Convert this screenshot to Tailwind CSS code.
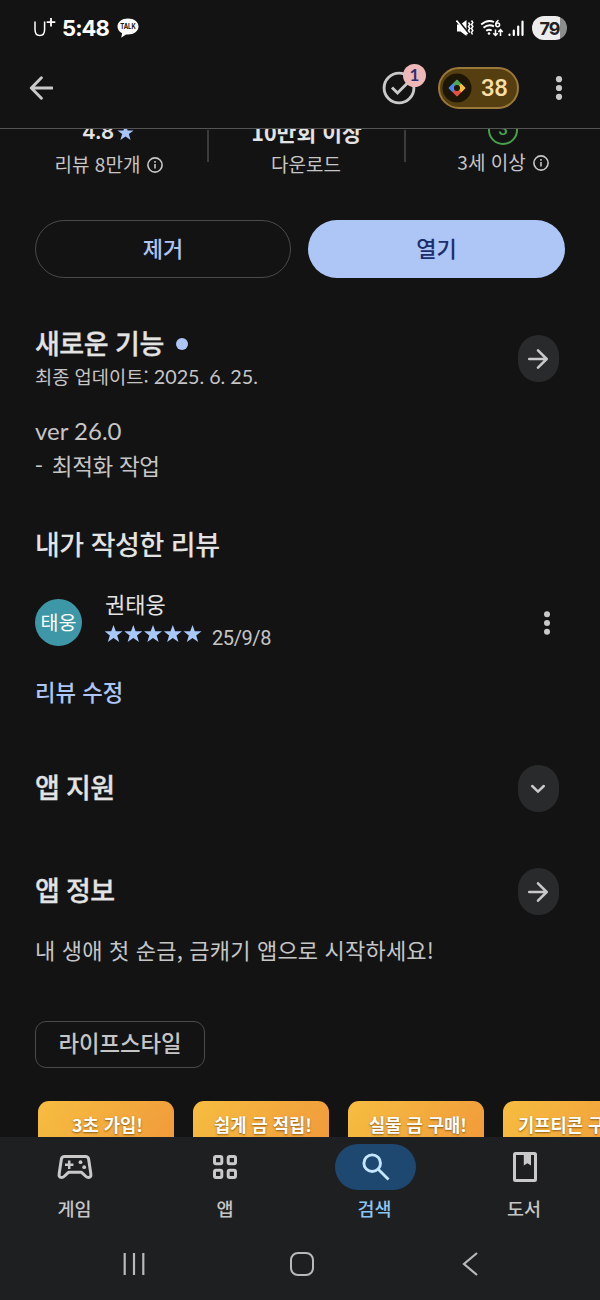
<!DOCTYPE html>
<html lang="ko">
<head>
<meta charset="utf-8">
<title>앱 정보</title>
<script src="https://cdn.jsdelivr.net/npm/@tailwindcss/browser@4"></script>
</head>
<body class="bg-[#131313]">
<div class="flex h-[1300px] w-[600px] flex-col overflow-hidden bg-[#131313] font-['Noto_Sans_CJK_KR',sans-serif] font-medium text-[#c6c6c6] whitespace-nowrap">

  <!-- status bar -->
  <header class="flex h-14 shrink-0 items-center pl-[33px] pr-[33px] text-white">
    <svg class="h-6 w-[23px]" viewBox="0 0 23 24" fill="none" stroke="#fff"><path d="M2 5.500V13.500Q2 19.500 6.800 19.500T11.600 13.500V5.500" stroke-width="1.500"/><path d="M18 2V10.500M13.700 6.200H22.300" stroke-width="1.800"/></svg>
    <span class="ml-[6px] w-[47px] font-['Inter',sans-serif] text-[22px] leading-6 font-bold tracking-[-0.9px]">5:48</span>
    <svg class="ml-2 h-6 w-[22px]" viewBox="0 0 22 24"><path d="M11 2.500C5 2.500.5 6 .5 10.500c0 3 1.800 5.400 4.600 6.800L4.200 21.800 9 18.400c7 .8 12.500-2.900 12.500-7.900 0-4.500-4.500-8-10.500-8Z" fill="#fff"/><text x="11" y="13.200" text-anchor="middle" font-family="Inter, sans-serif" font-size="7" font-weight="700" textLength="15.500" lengthAdjust="spacingAndGlyphs" fill="#131313">TALK</text></svg>
    <div class="ml-auto flex items-center">
      <svg class="h-6 w-[18px]" viewBox="0 0 18 24"><path d="M1 8.500h3.500L10.500 4v16L4.500 15.500H1Z" fill="#fff"/><path d="M.5 2.500 13 18" stroke="#131313" stroke-width="2"/><path d="M.5 4.500 11.500 18.200" stroke="#fff" stroke-width="1.700"/><path d="M12.500 6.500l1.300 2-1.300 2 1.300 2-1.300 2 1.300 2M15.500 4.500l1.300 2-1.300 2 1.300 2-1.300 2 1.300 2-1.300 2 1 2" fill="none" stroke="#fff" stroke-width="1.500"/></svg>
      <svg class="ml-[6px] h-6 w-[24px]" viewBox="0 0 24 24" fill="none" stroke="#fff" stroke-width="1.900"><path d="M1.200 8.500Q7.500 3 14 6M3.500 11.700Q8.500 7.500 14 10.300M6.200 14.800Q9 12.700 11.700 14.500"/><circle cx="9" cy="17.500" r="1.300" fill="#fff" stroke="none"/><path d="M18.500 4.200Q15.800 6 15.900 8.500" stroke-width="1.500"/><circle cx="17.700" cy="8.800" r="1.900" stroke-width="1.500"/><path d="M15.500 13.500v6M13.300 17.200l2.200 2.300 2.200-2.300M20.500 20v-6M18.300 16l2.200-2.300 2.200 2.300" stroke-width="1.500"/></svg>
      <svg class="ml-[3px] h-6 w-[18px]" viewBox="0 0 18 24" stroke="#fff" stroke-width="2.200" stroke-linecap="round"><path d="M2.500 18.500v.5M6.800 14.500v4.500M11.200 10.500v8.500M15.500 5.500v13.500"/></svg>
      <div class="ml-[7px] flex h-6 w-[35px] items-center justify-center rounded-full bg-[linear-gradient(90deg,#ededed_0_28px,#8d8d8d_28px)] font-['Inter',sans-serif] text-[18px] font-bold tracking-[-1px] text-[#222]">79</div>
    </div>
  </header>

  <!-- app bar -->
  <div class="flex h-[73px] shrink-0 items-center border-b border-[#545454] pb-[9px] pl-[29px] pr-[37px]">
    <svg class="h-6 w-6" viewBox="0 0 24 24" fill="none" stroke="#c9c9c9" stroke-width="2.900" stroke-linecap="round" stroke-linejoin="round"><path d="M12.400 1.700 2.300 12l10.100 10.300M3 12H23"/></svg>
    <div class="relative ml-auto h-9 w-9">
      <svg class="h-9 w-9" viewBox="0 0 36 36" fill="none" stroke="#c9c9c9" stroke-width="2.900"><circle cx="18" cy="18" r="14.900"/><path d="M11 17.500l5.500 5.500L26.500 13"/></svg>
      <span class="absolute left-[22px] top-[-6px] flex h-[23px] w-[23px] items-center justify-center rounded-full bg-[#efb8b8] font-['Lato',sans-serif] text-[17px] font-bold text-[#2b2d72]">1</span>
    </div>
    <div class="ml-[21px] flex h-[42px] w-[81px] items-center rounded-full border-2 border-[#9a7838] bg-[#553f11] pl-[2px]">
      <svg class="h-[30px] w-[30px]" viewBox="0 0 30 30"><circle cx="15" cy="15" r="14.500" fill="#1d1607"/><g transform="rotate(45 15 15)"><path d="M9 14h6v7h-5a1 1 0 0 1-1-1Z" fill="#4c86ee"/><path d="M10 9h6v6H9v-5a1 1 0 0 1 1-1Z" fill="#4fa65a"/><path d="M15 9h5a1 1 0 0 1 1 1v6h-6Z" fill="#f4bd3c"/><path d="M14 15h7v5a1 1 0 0 1-1 1h-6Z" fill="#e4503f"/></g><path d="M15 6.500 19.200 10.700 15 15 10.800 10.700Z" fill="#4fa65a"/><path d="M10.800 10.700 15 15l-4.200 4.300L6.500 15Z" fill="#4c86ee"/><path d="M19.200 10.700 23.500 15l-4.300 4.300L15 15Z" fill="#f4bd3c"/><path d="M15 15l4.200 4.300L15 23.500l-4.200-4.200Z" fill="#e4503f"/><circle cx="15" cy="15" r="3" fill="#1d1607"/></svg>
      <span class="ml-[9px] font-['Roboto',sans-serif] text-[24px] leading-8 font-medium tracking-[-0.4px] text-[#fbdfa6]">38</span>
    </div>
    <svg class="ml-9 h-6 w-2" viewBox="0 0 8 24" fill="#c9c9c9"><circle cx="4" cy="3.200" r="3.100"/><circle cx="4" cy="12" r="3.100"/><circle cx="4" cy="20.800" r="3.100"/></svg>
  </div>

  <!-- scrolling page -->
  <main class="flex h-[1008px] shrink-0 flex-col overflow-hidden">
    <section class="flex h-[49px] shrink-0 items-end overflow-hidden pl-[11px] text-[19px]">
      <div class="flex w-[196px] flex-col items-center">
        <div class="mb-[2px] flex items-center pr-[2px] font-['Inter',sans-serif] text-[20.500px] leading-6 font-semibold text-[#e3e3e3]">4.8<svg class="ml-[3px] h-[17px] w-[17px]" viewBox="0 0 24 24" fill="#a8c4fa"><path d="M12 1l3 8h8.500l-6.800 5.200 2.500 8.300L12 17.500l-7.200 5 2.500-8.300L.5 9H9Z"/></svg></div>
        <div class="mt-1 flex h-7 items-center text-[19px]"><span class="font-normal">리뷰 8만개</span><svg class="ml-[7px] mt-[2px] h-4 w-4" viewBox="0 0 16 16" fill="none" stroke="#c6c6c6" stroke-width="1.600"><circle cx="8" cy="8" r="7.100"/><path d="M8 7v4.500M8 4v1.700"/></svg></div>
      </div>
      <div class="mb-4 h-8 w-[2px] bg-[#3c3c3c]"></div>
      <div class="flex w-[195px] flex-col items-center">
        <div class="mb-[2px] text-[21.500px] leading-6 font-bold text-[#e3e3e3]">10만회 이상</div>
        <div class="mt-1 h-7 pr-px text-[19px] leading-7 font-normal">다운로드</div>
      </div>
      <div class="mb-4 h-8 w-[2px] bg-[#3c3c3c]"></div>
      <div class="flex w-[194px] flex-col items-center">
        <div class="flex h-[30px] w-[30px] items-center justify-center rounded-full border-2 border-[#48a04f] font-['Roboto',sans-serif] text-[17px] font-medium text-[#48a04f]">3</div>
        <div class="mb-[2px] mt-[3px] flex h-7 items-center"><span class="text-[19px] font-normal">3세 이상</span><svg class="ml-[7px] mt-[2px] h-4 w-4" viewBox="0 0 16 16" fill="none" stroke="#c6c6c6" stroke-width="1.600"><circle cx="8" cy="8" r="7.100"/><path d="M8 7v4.500M8 4v1.700"/></svg></div>
      </div>
    </section>

    <section class="mt-[42px] flex h-[58px] shrink-0 gap-[17px] pl-[35px] pr-[35px] text-[22px]">
      <button class="flex w-[256px] items-center justify-center rounded-full border-[1.500px] border-[#4a4a4a] pb-[3px] text-[#aec6f6]">제거</button>
      <button class="flex w-[257px] items-center justify-center rounded-full bg-[#aec6f6] pb-[3px] text-[#1c2f6b]">열기</button>
    </section>

    <section class="mt-[50px] flex shrink-0 items-start justify-between pl-[35px] pr-[41px]">
      <div>
        <h2 class="flex h-8 items-center text-[27px] text-[#e3e3e3] [-webkit-text-stroke:0.3px_#e3e3e3]"><span class="-mt-px tracking-[-0.5px]">새로운 기능</span><span class="ml-3 h-3 w-3 rounded-full bg-[#aec6f6]"></span></h2>
        <p class="h-8 text-[18.700px] leading-8 font-normal">최종 업데이트: <span class="font-['Lato',sans-serif] text-[19.700px]">2025. 6. 25.</span></p>
      </div>
      <button class="mt-[7px] flex h-[47px] w-[41px] items-center justify-center rounded-[20.500px] bg-[#292a2b] pr-px"><svg class="h-5 w-5" viewBox="0 0 20 20" fill="none" stroke="#c9c9c9" stroke-width="2.500" stroke-linecap="round" stroke-linejoin="round"><path d="M10 1.300 18.700 10 10 18.700M1.200 10H18"/></svg></button>
    </section>

    <div class="mt-[22px] h-[68px] shrink-0 pl-[35px] text-[22.500px] leading-[34px] font-normal">
      <p class="h-[34px] font-['Lato',sans-serif] text-[24px]">ver 26.0</p>
      <p class="h-[34px] tracking-[-0.3px]"><span class="tracking-[1.300px]">- </span>최적화 작업</p>
    </div>

    <h2 class="mt-11 h-9 shrink-0 pl-[35px] text-[27px] leading-9 tracking-[-0.500px] text-[#e3e3e3]">내가 작성한 리뷰</h2>

    <section class="mt-7 flex h-[58px] shrink-0 items-center pl-[35px] pr-[49px]">
      <div class="mt-[6px] flex h-[47px] w-[47px] items-center justify-center rounded-full bg-[#3e97a6] text-[19.500px] font-normal text-white">태웅</div>
      <div class="ml-[23px] flex h-[58px] flex-col">
        <p class="-mt-px h-7 text-[22px] leading-7 font-normal text-[#e3e3e3]">권태웅</p>
        <div class="mt-[2px] flex h-[30px] items-center">
          <svg class="h-[18px] w-[97px]" viewBox="0 0 97 18"><defs><path id="star" d="M9 0l2.300 6.200H18l-5.300 4.200L14.700 17 9 13.100 3.300 17l2-6.600L0 6.200h6.700Z"/></defs><g fill="#a8c7fa"><use href="#star" x="-.5"/><use href="#star" x="19.300"/><use href="#star" x="39"/><use href="#star" x="58.800"/><use href="#star" x="78.500"/></g></svg>
          <span class="ml-[10px] mt-2 font-['Roboto',sans-serif] text-[20px] leading-6 font-normal tracking-[-0.400px]">25/9/8</span>
        </div>
      </div>
      <svg class="ml-auto mt-2 h-6 w-2" viewBox="0 0 8 24" fill="#c9c9c9"><circle cx="4" cy="3.200" r="3"/><circle cx="4" cy="12" r="3"/><circle cx="4" cy="20.800" r="3"/></svg>
    </section>

    <a class="-mb-px mt-[27px] h-8 shrink-0 pl-[35px] text-[22.300px] leading-8 text-[#aec6f6]">리뷰 수정</a>

    <section class="mt-[59px] flex h-[47px] shrink-0 items-center justify-between pl-[35px] pr-[41px]">
      <h2 class="pb-1 text-[27px] leading-9 tracking-[-0.700px] text-[#e3e3e3] [-webkit-text-stroke:0.3px_#e3e3e3]">앱 지원</h2>
      <button class="flex h-[47px] w-[41px] items-center justify-center rounded-[20.500px] bg-[#292a2b] pr-px"><svg class="h-5 w-5" viewBox="0 0 20 20" fill="none" stroke="#c9c9c9" stroke-width="2.500" stroke-linecap="round"><path d="M4.200 7 10 12.600 15.800 7"/></svg></button>
    </section>

    <section class="mt-14 flex h-[47px] shrink-0 items-center justify-between pl-[35px] pr-[41px]">
      <h2 class="pb-1 text-[27px] leading-9 tracking-[-0.700px] text-[#e3e3e3] [-webkit-text-stroke:0.3px_#e3e3e3]">앱 정보</h2>
      <button class="flex h-[47px] w-[41px] items-center justify-center rounded-[20.500px] bg-[#292a2b] pr-px"><svg class="h-5 w-5" viewBox="0 0 20 20" fill="none" stroke="#c9c9c9" stroke-width="2.500" stroke-linecap="round" stroke-linejoin="round"><path d="M10 1.300 18.700 10 10 18.700M1.200 10H18"/></svg></button>
    </section>

    <p class="mt-[18px] h-8 shrink-0 pl-[35px] text-[22px] leading-8 font-normal tracking-[0.190px]">내 생애 첫 순금, 금캐기 앱으로 시작하세요!</p>

    <div class="ml-[35px] mt-14 flex h-[47px] w-[170px] shrink-0 items-center justify-center rounded-[11px] border-[1.500px] border-[#4a4a4a] pb-[3px] text-[22.300px]">라이프스타일</div>

    <section class="mt-[33px] flex shrink-0 gap-[19px] pl-[38px] text-[17.700px] font-bold text-white [text-shadow:0_1px_2px_#8a5a10]">
      <div class="h-[200px] w-[136px] shrink-0 rounded-[11px] bg-[linear-gradient(120deg,#f6bd40,#f0983a_150px)] pt-[11px] pl-[3px] text-center leading-6">3초 가입!</div>
      <div class="h-[200px] w-[136px] shrink-0 rounded-[11px] bg-[linear-gradient(120deg,#f6bd40,#f0983a_150px)] pt-[11px] pl-1 text-center leading-6">쉽게 금 적립!</div>
      <div class="h-[200px] w-[136px] shrink-0 rounded-[11px] bg-[linear-gradient(120deg,#f6bd40,#f0983a_150px)] pt-[11px] pl-1 text-center leading-6">실물 금 구매!</div>
      <div class="h-[200px] w-[136px] shrink-0 rounded-[11px] bg-[linear-gradient(120deg,#f6bd40,#f0983a_150px)] pt-[11px] pl-[15px] leading-6">기프티콘 구매!</div>
    </section>
  </main>

  <!-- bottom navigation -->
  <footer class="flex h-[163px] shrink-0 flex-col bg-[#1e1f20]">
    <nav class="grid h-[90px] grid-cols-4 pt-[7px] text-[18.500px]">
      <a class="flex flex-col items-center pr-px"><span class="flex h-[46px] items-center"><svg class="h-6 w-9" viewBox="0 0 36 24" fill="none" stroke="#c9c9c9" stroke-width="3" stroke-linejoin="round"><path d="M7.500 1.500H28.500Q31 1.500 31.600 4L33.800 18.500Q34.400 22.500 31.500 22.500 30 22.500 29 21.500L24.500 17.300H11.500L7 21.500Q6 22.500 4.500 22.500 1.600 22.500 2.200 18.500L4.400 4Q5 1.500 7.500 1.500Z"/><path d="M12.200 5.500v8.400M8 9.700h8.400" stroke-width="2.500"/><g fill="#c9c9c9" stroke="none"><circle cx="23.500" cy="7.200" r="1.900"/><circle cx="27.200" cy="12.200" r="1.900"/></g></svg></span><span class="mt-[6px] leading-6">게임</span></a>
      <a class="flex flex-col items-center"><span class="flex h-[46px] items-center"><svg class="h-6 w-6" viewBox="0 0 24 24" fill="none" stroke="#c9c9c9" stroke-width="3"><rect x="1.500" y="1.500" width="7.300" height="7.300" rx="1.500"/><rect x="15.200" y="1.500" width="7.300" height="7.300" rx="1.500"/><rect x="1.500" y="15.200" width="7.300" height="7.300" rx="1.500"/><rect x="15.200" y="15.200" width="7.300" height="7.300" rx="1.500"/></svg></span><span class="mt-[6px] leading-6">앱</span></a>
      <a class="flex flex-col items-center text-[#8cc6f6]"><span class="flex h-[46px] w-[81px] items-center justify-center rounded-full bg-[#1e4870]"><svg class="ml-px h-7 w-7" viewBox="0 0 28 28" fill="none" stroke="#c5e6ff" stroke-width="2.900"><circle cx="10.200" cy="10.200" r="8.300"/><path d="M16 16l10.500 10.500"/></svg></span><span class="mt-[6px] pr-px leading-6">검색</span></a>
      <a class="flex flex-col items-center"><span class="flex h-[46px] items-center"><svg class="h-[30px] w-6" viewBox="0 0 24 30"><rect x="1.500" y="1.500" width="21" height="27" rx="1" fill="none" stroke="#c9c9c9" stroke-width="3"/><path d="M10.800 1h7.200v12.500l-3.600-2.200-3.600 2.200Z" fill="#c9c9c9"/></svg></span><span class="mt-[6px] pr-[2px] leading-6">도서</span></a>
    </nav>
    <div class="flex h-[74px] items-center justify-between pt-[2px] pl-[122px] pr-[122px]">
      <svg class="h-6 w-6" viewBox="0 0 24 24" stroke="#b9b9b9" stroke-width="2.200"><path d="M2.700 1v22M12 1v22M21.300 1v22"/></svg>
      <svg class="mr-1 h-6 w-6" viewBox="0 0 24 24" fill="none" stroke="#b9b9b9" stroke-width="2"><rect x="1" y="1" width="22" height="22" rx="7"/></svg>
      <svg class="h-6 w-[16px]" viewBox="0 0 16 24" fill="none" stroke="#b9b9b9" stroke-width="2.200"><path d="M15 1 2 12l13 11"/></svg>
    </div>
  </footer>
</div>
</body>
</html>
